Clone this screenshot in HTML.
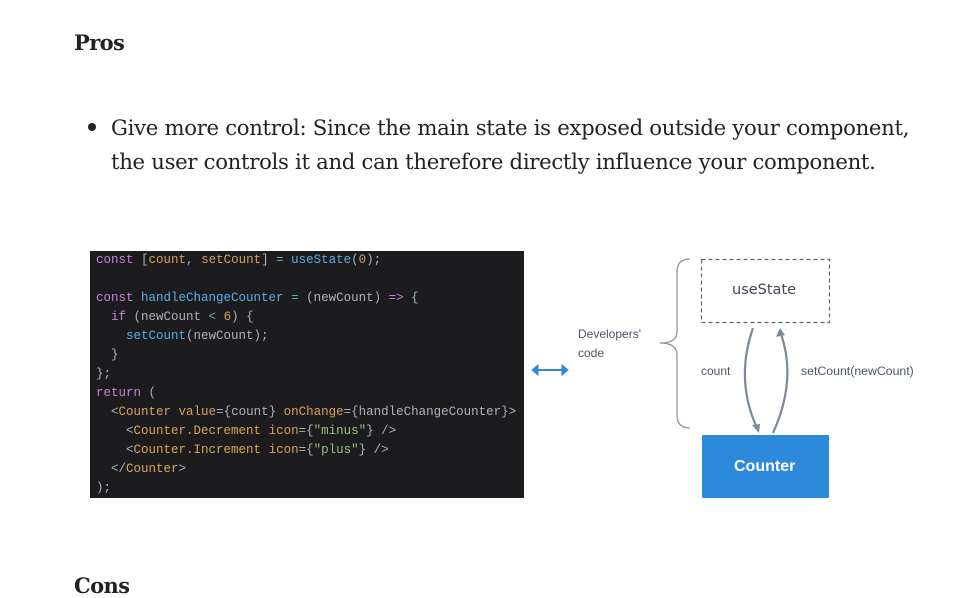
<!DOCTYPE html>
<html><head><meta charset="utf-8"><style>
body{margin:0;width:959px;height:586px;background:#fff;position:relative;overflow:hidden;font-family:"DejaVu Serif",serif;color:#222}
.a{position:absolute;white-space:pre}
.code{position:absolute;left:90px;top:251px;width:434px;height:247px;background:#1c1c1e;font-family:"Liberation Mono",monospace;font-size:12.5px;line-height:19px;color:#abb2bf}
.code div{position:absolute;left:6px;white-space:pre}
.k{color:#c283d9}.v{color:#d7a060}.f{color:#5aaee8}.o{color:#56b6c2}.s{color:#98c379}.t{color:#d9a55a}.p{color:#abb2bf}
.sans{font-family:"Liberation Sans",sans-serif;color:#4a5563}
</style></head><body>
<div class="a" style="left:74px;top:30px;font-size:21px;font-weight:bold;letter-spacing:-0.6px">Pros</div>
<div style="position:absolute;left:88px;top:123px;width:8px;height:8px;border-radius:50%;background:#222"></div>
<div class="a" style="left:111px;top:111px;font-size:21.2px;line-height:34px;letter-spacing:-0.3px">Give more control: Since the main state is exposed outside your component,
the user controls it and can therefore directly influence your component.</div>
<div class="a" style="left:74px;top:573px;font-size:21px;font-weight:bold;letter-spacing:-0.6px">Cons</div>

<div class="code">
<div style="top:0"><span class="k">const</span> [<span class="v">count</span>, <span class="v">setCount</span>] <span class="o">=</span> <span class="f">useState</span>(<span class="v">0</span>);</div>
<div style="top:38px"><span class="k">const</span> <span class="f">handleChangeCounter</span> <span class="o">=</span> (newCount) <span class="k">=&gt;</span> {</div>
<div style="top:57px">  <span class="k">if</span> (newCount <span class="o">&lt;</span> <span class="v">6</span>) {</div>
<div style="top:76px">    <span class="f">setCount</span>(newCount);</div>
<div style="top:95px">  }</div>
<div style="top:114px">};</div>
<div style="top:133px"><span class="k">return</span> (</div>
<div style="top:152px">  &lt;<span class="t">Counter</span> <span class="v">value</span>={count} <span class="v">onChange</span>={handleChangeCounter}&gt;</div>
<div style="top:171px">    &lt;<span class="t">Counter.Decrement</span> <span class="v">icon</span>={<span class="s">"minus"</span>} /&gt;</div>
<div style="top:190px">    &lt;<span class="t">Counter.Increment</span> <span class="v">icon</span>={<span class="s">"plus"</span>} /&gt;</div>
<div style="top:209px">  &lt;/<span class="t">Counter</span>&gt;</div>
<div style="top:228px">);</div>
</div>

<svg style="position:absolute;left:0;top:0" width="959" height="586">
<g fill="#2d89d9" stroke="#2d89d9" stroke-width="2">
<line x1="536" y1="370" x2="564" y2="370"/>
<path d="M532 370 L538 365 L538 375Z" stroke-width="1"/>
<path d="M568 370 L562 365 L562 375Z" stroke-width="1"/>
</g>
<path d="M690 259 Q677 259 677 272 L677 332 Q677 343 660 343 Q677 343 677 355 L677 415 Q677 428 690 428" fill="none" stroke="#8a96a3" stroke-width="1.3"/>
<rect x="701.5" y="259.5" width="128" height="63" fill="none" stroke="#5b6673" stroke-width="1.2" stroke-dasharray="4 3"/>
<rect x="702" y="435" width="127" height="63" rx="1" fill="#2d89d9"/>
<g fill="none" stroke="#7d8996" stroke-width="2.2">
<path d="M753 328 Q735 380 757 428"/>
<path d="M773 433 Q797 380 781 334"/>
</g>
<g fill="#7d8996">
<path d="M759 433 L752 425 L760 424Z"/>
<path d="M780 328 L776 337 L785 335Z"/>
</g>
</svg>
<div class="a" style="left:732px;top:282px;font-family:'DejaVu Sans',sans-serif;font-size:14.5px;color:#3f4855">useState</div>
<div class="a" style="left:734px;top:458px;font-family:'Liberation Sans',sans-serif;font-size:16px;font-weight:bold;color:#fff">Counter</div>
<div class="a sans" style="left:578px;top:325px;font-size:12px;line-height:19px">Developers'
code</div>
<div class="a sans" style="left:701px;top:364px;font-size:12px">count</div>
<div class="a sans" style="left:801px;top:364px;font-size:12.3px">setCount(newCount)</div>
</body></html>
